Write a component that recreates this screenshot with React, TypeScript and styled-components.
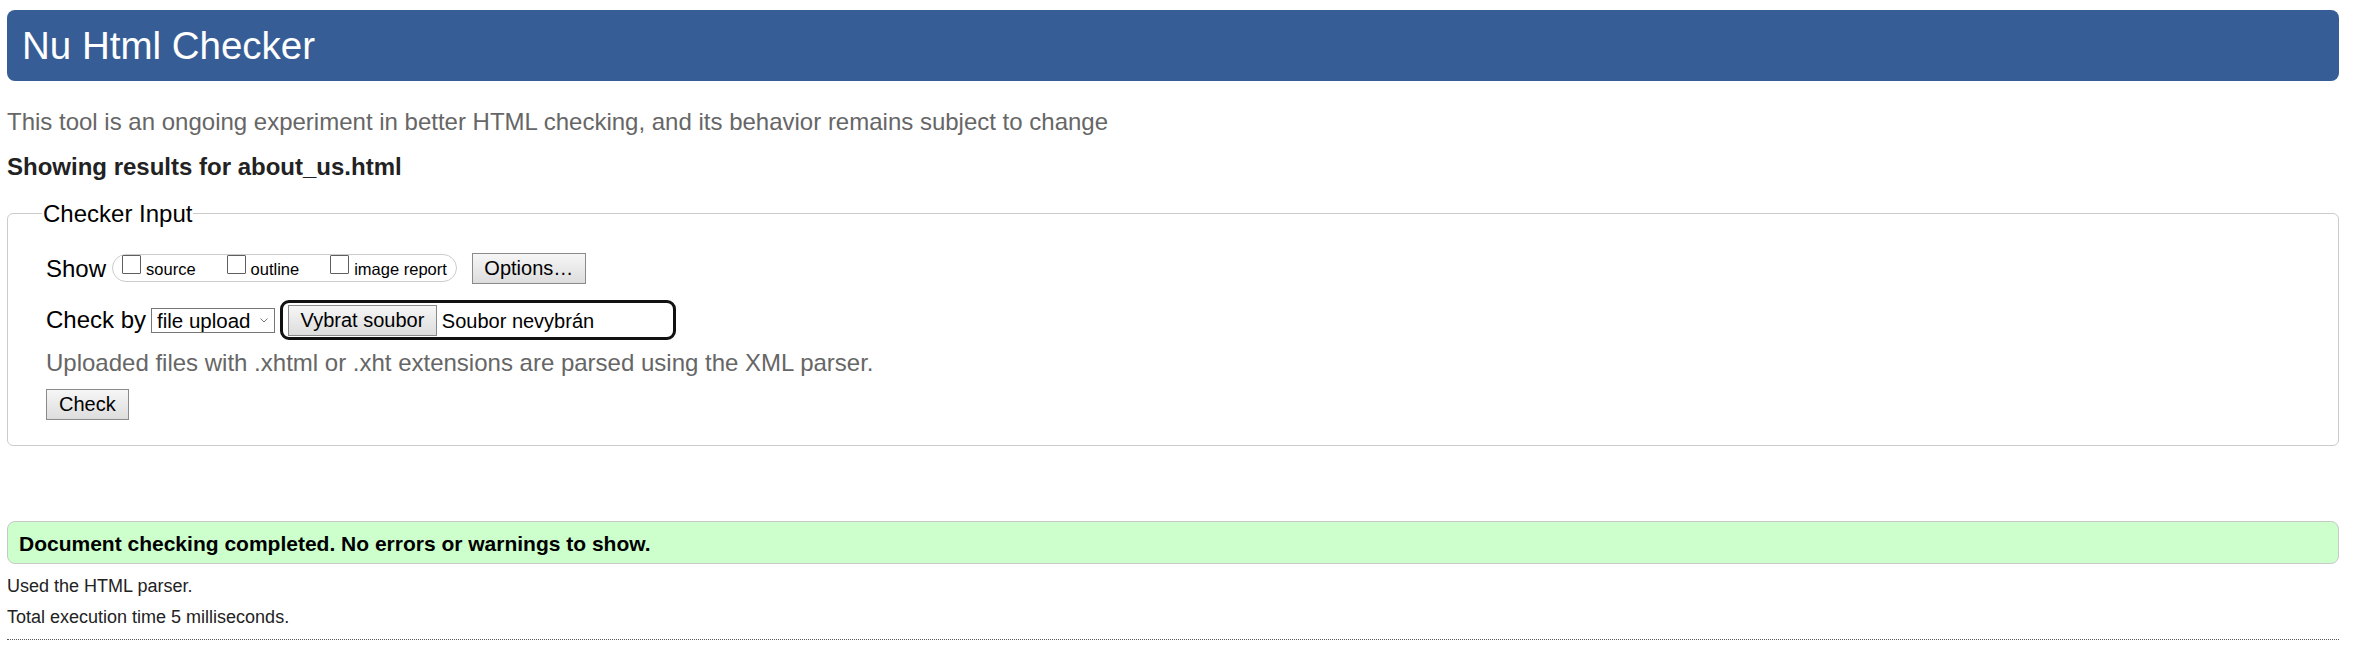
import React from 'react'
import styled, { createGlobalStyle } from 'styled-components'

const GlobalStyle = createGlobalStyle`
  body {
    margin: 0;
    background: #fff;
    color: #000;
    font-family: "Liberation Sans", Arial, sans-serif;
  }
`

const showOptions = ['source', 'outline', 'image report']

const App = () => (
  <>
    <GlobalStyle />
    <Page>
      <Header>Nu Html Checker</Header>
      <Tagline>
        This tool is an ongoing experiment in better HTML checking, and its behavior remains subject to change
      </Tagline>
      <ResultsFor>Showing results for about_us.html</ResultsFor>

      <InputFieldset>
        <Legend>Checker Input</Legend>

        <ShowRow>
          <span>Show</span>
          <OptionGroup>
            {showOptions.map((name) => (
              <OptionLabel key={name}>
                <Checkbox type="checkbox" />
                <OptionText>{name}</OptionText>
              </OptionLabel>
            ))}
          </OptionGroup>
          <Button type="button">Options…</Button>
        </ShowRow>

        <CheckByRow>
          <span>Check by</span>
          <SelectWrap>
            <Select defaultValue="file">
              <option value="address">address</option>
              <option value="file">file upload</option>
              <option value="text">text input</option>
            </Select>
            <Chevron width="8" height="5" viewBox="0 0 8 5">
              <path d="M0.5 0.5 L4 4 L7.5 0.5" fill="none" stroke="#777" strokeWidth="1" />
            </Chevron>
          </SelectWrap>
          <FileField>
            <Button type="button">Vybrat soubor</Button>
            <FileName>Soubor nevybrán</FileName>
          </FileField>
        </CheckByRow>

        <Hint>Uploaded files with .xhtml or .xht extensions are parsed using the XML parser.</Hint>

        <CheckButton type="button">Check</CheckButton>
      </InputFieldset>

      <SuccessBox>Document checking completed. No errors or warnings to show.</SuccessBox>
      <Stat>Used the HTML parser.</Stat>
      <Stat>Total execution time 5 milliseconds.</Stat>
      <Rule />
    </Page>
  </>
)

export default App

const Page = styled.div`
  padding: 10px 32px 0 7px;
`

const Header = styled.h1`
  margin: 0;
  height: 71px;
  padding: 0 0 0 15px;
  line-height: 71px;
  font-size: 38.5px;
  font-weight: normal;
  color: #fff;
  background: #365d95;
  border-radius: 8px;
`

const Tagline = styled.p`
  margin: 26px 0 0;
  font-size: 24px;
  line-height: 30px;
  color: #666;
`

const ResultsFor = styled.h2`
  margin: 15px 0 0;
  font-size: 24px;
  line-height: 30px;
  font-weight: bold;
  color: #222;
`

const InputFieldset = styled.fieldset`
  margin: 18.5px 0 0;
  padding: 26px 0 25px 38px;
  border: 1px solid #ccc;
  border-radius: 6px;
  font-size: 24px;
`

const Legend = styled.legend`
  margin-left: -4px;
  padding: 0 1px;
  font-size: 24px;
  line-height: 26px;
`

const ShowRow = styled.div`
  display: flex;
  align-items: center;
  height: 31px;
  line-height: 31px;

  & > span {
    margin-right: 6px;
  }
`

const OptionGroup = styled.div`
  display: flex;
  align-items: flex-start;
  gap: 31px;
  height: 26px;
  padding: 0 9px;
  margin-right: 15px;
  border: 1px solid #ccc;
  border-radius: 14px;
`

const OptionLabel = styled.label`
  display: flex;
  align-items: flex-start;
  gap: 5px;
`

const Checkbox = styled.input`
  appearance: none;
  width: 19px;
  height: 19px;
  margin: 0;
  border: 1.5px solid #5f5f5f;
  border-radius: 1px;
  background: #fff;
`

const OptionText = styled.span`
  margin-top: 5px;
  font-size: 16.5px;
  line-height: 19px;
`

const Button = styled.button`
  height: 31px;
  padding: 0 11.5px;
  font-family: "Liberation Sans", Arial, sans-serif;
  font-size: 20px;
  color: #000;
  border: 1px solid #8a8a8a;
  border-radius: 0;
  background: linear-gradient(#f6f6f6, #dddddd);
`

const CheckByRow = styled.div`
  display: flex;
  align-items: center;
  height: 40px;
  margin-top: 16.5px;
  line-height: 40px;

  & > span {
    margin-right: 5px;
  }
`

const SelectWrap = styled.span`
  position: relative;
  display: inline-flex;
`

const Select = styled.select`
  appearance: none;
  width: 124px;
  height: 25px;
  padding: 0 0 0 5px;
  font-family: "Liberation Sans", Arial, sans-serif;
  font-size: 20.5px;
  color: #000;
  background: #fff;
  border: 1px solid #767676;
  border-radius: 0;
`

const Chevron = styled.svg`
  position: absolute;
  right: 7px;
  top: 10px;
  pointer-events: none;
`

const FileField = styled.span`
  box-sizing: border-box;
  display: flex;
  align-items: center;
  width: 396px;
  height: 40px;
  padding: 1px 0 0 5px;
  border: 3px solid #111;
  border-radius: 9px;
`

const FileName = styled.span`
  margin-left: 5px;
  font-size: 20px;
  line-height: 24px;
`

const Hint = styled.p`
  margin: 8px 0 0;
  font-size: 24px;
  line-height: 30px;
  color: #666;
`

const CheckButton = styled(Button)`
  margin-top: 11px;
  padding: 0 12px;
`

const SuccessBox = styled.p`
  margin: 75px 0 0;
  padding: 2px 0 0 11px;
  height: 39px;
  line-height: 39px;
  font-size: 21px;
  font-weight: bold;
  background: #ccffcc;
  border: 1px solid #c8c8c8;
  border-radius: 8px;
`

const Stat = styled.p`
  margin: 7px 0 0;
  font-size: 18px;
  line-height: 31px;
  color: #222;

  & + & {
    margin-top: 0;
  }
`

const Rule = styled.hr`
  margin: 5.5px 0 0;
  border: 0;
  border-top: 1px dotted #555;
`
